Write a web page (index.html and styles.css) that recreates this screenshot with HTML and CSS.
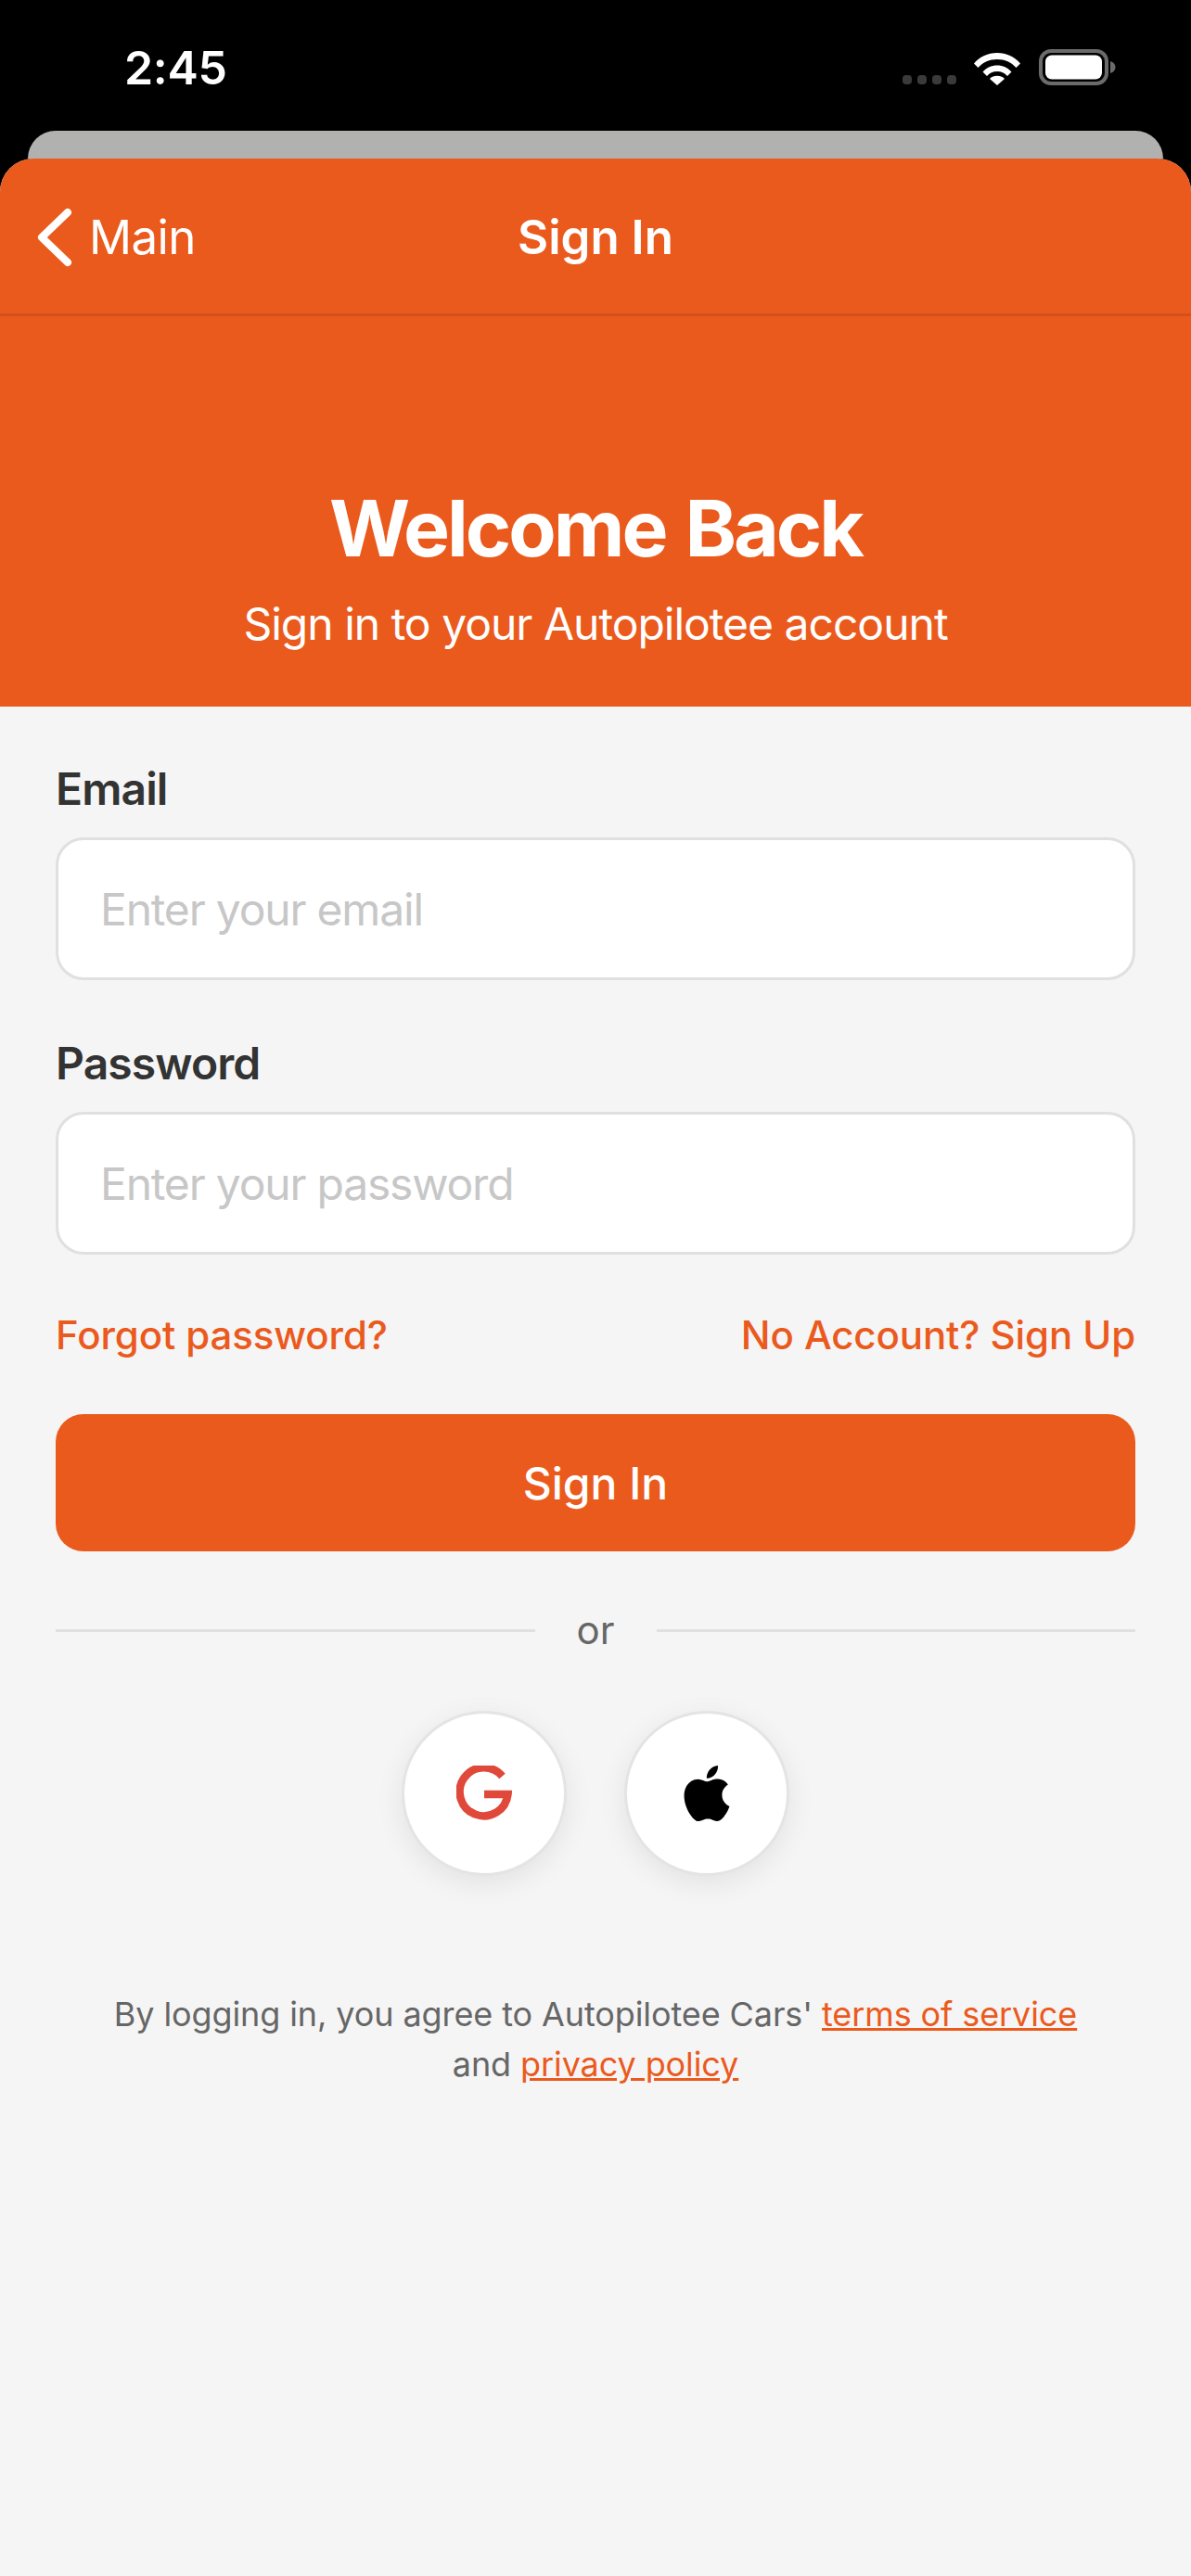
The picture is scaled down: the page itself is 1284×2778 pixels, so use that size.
FILE: index.html
```html
<!DOCTYPE html>
<html lang="en">
<head>
<meta charset="UTF-8">
<meta name="viewport" content="width=device-width, initial-scale=1.0">
<title>Sign In</title>
<link rel="stylesheet" href="styles.css">
</head>
<body>
<div class="status-bar">
  <span class="time">2:45</span>
  <div class="status-icons">
    <div class="signal"><i></i><i></i><i></i><i></i></div>
    <svg class="wifi" width="50" height="37" viewBox="0 0 50 37">
      <path d="M0 13.500C6.500 6 15 2 25 2s18.500 4 25 11.500l-4.500 4.500C40 12 33.500 9 25 9S10 12 4.500 18z" fill="#fff"/>
      <path d="M9.500 22.500C13.500 18 19 15.500 25 15.500s11.500 2.500 15.500 7l-4.500 4.500C33 23.800 29.500 22 25 22s-8 1.800-11 5z" fill="#fff"/>
      <path d="M17 30c2-2 5-3.200 8-3.200s6 1.200 8 3.200l-8 7z" fill="#fff"/>
    </svg>
    <svg class="battery" width="83" height="39" viewBox="0 0 83 39">
      <rect x="2" y="2" width="71" height="35" rx="11" fill="none" stroke="#6b6b6b" stroke-width="4"/>
      <rect x="7" y="6.500" width="61" height="26" rx="7" fill="#fff"/>
      <path d="M77 13c3.500 1 5.500 3.500 5.500 6.500S80.500 25 77 26z" fill="#6b6b6b"/>
    </svg>
  </div>
</div>
<div class="back-card"></div>
<div class="sheet">
  <div class="nav">
    <a class="nav-back" href="#">
      <svg width="40" height="64" viewBox="0 0 40 64"><path d="M35 5 7 32l28 27" fill="none" stroke="#fff" stroke-width="8" stroke-linecap="round" stroke-linejoin="round"/></svg>
      <span>Main</span>
    </a>
    <div class="nav-title">Sign In</div>
    <div></div>
  </div>
  <div class="hero">
    <h1>Welcome Back</h1>
    <p>Sign in to your Autopilotee account</p>
  </div>
  <form class="login-form">
    <label for="email">Email</label>
    <input type="text" id="email" placeholder="Enter your email">
    <label for="password">Password</label>
    <input type="text" id="password" placeholder="Enter your password">
    <div class="form-links">
      <a href="#">Forgot password?</a>
      <a href="#">No Account? Sign Up</a>
    </div>
    <button type="button" class="submit-btn">Sign In</button>
    <div class="divider"><span>or</span></div>
    <div class="social">
      <button type="button" class="social-btn" aria-label="Google">
        <svg width="60" height="60" viewBox="0 0 60 60">
          <path d="M49.500 11.500A26 26 0 1 0 55.500 31H30" fill="none" stroke="#e0483a" stroke-width="8.500"/>
        </svg>
      </button>
      <button type="button" class="social-btn" aria-label="Apple">
        <svg width="60" height="60" viewBox="0 0 24 24">
          <path d="M12.152 6.896c-.948 0-2.415-1.078-3.960-1.040-2.040.027-3.910 1.183-4.961 3.014-2.117 3.675-.546 9.103 1.519 12.090 1.013 1.454 2.208 3.090 3.792 3.039 1.520-.065 2.090-.987 3.935-.987 1.831 0 2.350.987 3.960.948 1.637-.026 2.676-1.480 3.676-2.948 1.156-1.688 1.636-3.325 1.662-3.415-.039-.013-3.182-1.221-3.220-4.857-.026-3.040 2.480-4.494 2.597-4.559-1.429-2.090-3.623-2.324-4.390-2.376-2-.156-3.675 1.090-4.610 1.090zM15.530 3.830c.843-1.012 1.400-2.427 1.245-3.830-1.207.052-2.662.805-3.532 1.818-.780.896-1.454 2.338-1.273 3.714 1.338.104 2.715-.688 3.559-1.701"/>
        </svg>
      </button>
    </div>
    <p class="terms">By logging in, you agree to Autopilotee Cars' <a href="#">terms of service</a><br>and <a href="#">privacy policy</a></p>
  </form>
</div>
</body>
</html>
```
FILE: styles.css
```css
* {
  box-sizing: border-box;
}
html, body {
  margin: 0;
  height: 2778px;
}
body {
  display: flex;
  flex-direction: column;
  background-color: #000;
  font-family: Inter, "Liberation Sans", sans-serif;
  overflow: hidden;
}
a {
  color: #eb5a1d;
  text-decoration: none;
}

/* status bar */
.status-bar {
  height: 141px;
  flex-shrink: 0;
  display: flex;
  justify-content: space-between;
  align-items: flex-start;
  padding: 44px 81px 0 134px;
  color: #fff;
}
.time {
  font-size: 50px;
  font-weight: 600;
  line-height: 58px;
  letter-spacing: -0.3px;
}
.status-icons {
  display: flex;
  align-items: flex-end;
  margin-top: 9px;
}
.signal {
  display: flex;
  gap: 6px;
  margin: 0 19px 1px 0;
}
.signal i {
  width: 10px;
  height: 10px;
  border-radius: 4px;
  background-color: #3a3a3a;
}
.wifi {
  margin-right: 20px;
}

/* card stack */
.back-card {
  height: 30px;
  flex-shrink: 0;
  margin: 0 30px;
  background-color: #b1b1b0;
  border-radius: 30px 30px 0 0;
}
.sheet {
  flex: 1;
  background-color: #f5f5f5;
  border-radius: 36px 36px 0 0;
  overflow: hidden;
}

/* nav */
.nav {
  height: 170px;
  display: grid;
  grid-template-columns: 1fr auto 1fr;
  align-items: center;
  padding: 2px 38px 0;
  background-color: #eb5a1d;
  border-bottom: 3px solid #d4501b;
  color: #fff;
}
.nav-back {
  display: flex;
  align-items: center;
  gap: 18px;
  color: #fff;
  font-size: 51px;
  letter-spacing: -0.6px;
}
.nav-title {
  font-size: 51px;
  font-weight: 600;
}

/* hero */
.hero {
  height: 421px;
  padding-top: 178px;
  background-color: #eb5a1d;
  color: #fff;
  text-align: center;
}
.hero h1 {
  margin: 0;
  font-size: 84px;
  font-weight: 700;
  line-height: 102px;
  letter-spacing: -3px;
  word-spacing: 4px;
}
.hero p {
  margin: 23px 0 0;
  font-size: 48px;
  line-height: 58px;
  letter-spacing: -1px;
}

/* form */
.login-form {
  display: flex;
  flex-direction: column;
  padding: 60px 60px 0;
}
.login-form label {
  margin-bottom: 23px;
  color: #333;
  font-size: 48px;
  font-weight: 600;
  line-height: 58px;
  letter-spacing: -0.9px;
}
.login-form input {
  width: 100%;
  height: 154px;
  margin-bottom: 61px;
  padding: 0 45px;
  background-color: #fff;
  border: 3px solid #e0e0e0;
  border-radius: 30px;
  font-family: inherit;
  font-size: 48px;
  letter-spacing: -1.2px;
}
.login-form input::placeholder {
  color: #c7c7c7;
  opacity: 1;
}
.form-links {
  display: flex;
  justify-content: space-between;
  font-size: 42px;
  font-weight: 550;
  line-height: 52px;
  letter-spacing: -0.1px;
}
.submit-btn {
  height: 148px;
  margin-top: 59px;
  background-color: #eb5a1d;
  border: none;
  border-radius: 30px;
  color: #fff;
  font-family: inherit;
  font-size: 48px;
  font-weight: 500;
}
.divider {
  display: flex;
  align-items: center;
  gap: 45px;
  margin-top: 60px;
  color: #666;
  font-size: 42px;
  line-height: 50px;
}
.divider::before, .divider::after {
  content: "";
  flex: 1;
  height: 3px;
  background-color: #e0e0e0;
}
.social {
  display: flex;
  justify-content: center;
  gap: 62px;
  margin-top: 62px;
}
.social-btn {
  width: 178px;
  height: 178px;
  display: flex;
  align-items: center;
  justify-content: center;
  padding: 0;
  background-color: #fff;
  border: 3px solid #e4e4e4;
  border-radius: 50%;
  box-shadow: 0 8px 30px rgba(0, 0, 0, 0.08);
}
.terms {
  margin: 122px 0 0;
  color: #666;
  font-size: 36px;
  line-height: 54px;
  letter-spacing: -0.1px;
  text-align: center;
}
.terms a {
  text-decoration: underline;
}
```
